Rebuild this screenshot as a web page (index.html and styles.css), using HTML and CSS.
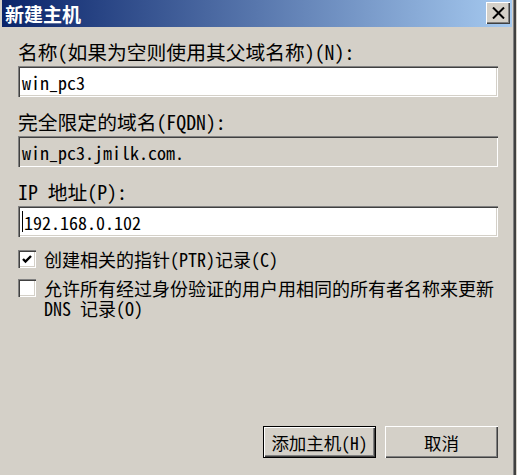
FILE: index.html
```html
<!DOCTYPE html>
<html lang="zh-CN">
<head>
    <meta charset="UTF-8">
    <title>新建主机</title>
    <link rel="stylesheet" href="styles.css">
</head>
<body>
    <div class="window">
        <div class="titlebar">
            <span class="title">新建主机</span>
            <button class="close" type="button">
                <svg width="13" height="12" viewBox="0 0 13 12">
                    <path d="M1 0.5 L12 11.5 M12 0.5 L1 11.5" stroke="#000" stroke-width="2"/>
                </svg>
            </button>
        </div>
        <div class="content">
            <label class="label">名称(如果为空则使用其父域名称)(N):</label>
            <div class="field">win_pc3</div>

            <label class="label">完全限定的域名(FQDN):</label>
            <div class="field readonly">win_pc3.jmilk.com.</div>

            <label class="label">IP 地址(P):</label>
            <div class="field"><span class="caret"></span>192.168.0.102</div>

            <div class="check-row first">
                <span class="checkbox checked">
                    <svg width="10" height="9" viewBox="0 0 10 9">
                        <path d="M1 4 L3.5 6.5 L9 1" fill="none" stroke="#000" stroke-width="2.4"/>
                    </svg>
                </span>
                <span class="check-text">创建相关的指针(PTR)记录(C)</span>
            </div>
            <div class="check-row">
                <span class="checkbox"></span>
                <span class="check-text">允许所有经过身份验证的用户用相同的所有者名称来更新<br>DNS 记录(O)</span>
            </div>

            <div class="actions">
                <button class="button default" type="button">添加主机(H)</button>
                <button class="button" type="button">取消</button>
            </div>
        </div>
    </div>
</body>
</html>
```

FILE: styles.css
```css
body {
    margin: 0;
    background-color: #d4d0c8;
    font-family: "Noto Sans Mono CJK SC", "Noto Sans CJK SC", sans-serif;
    font-size: 19.8px;
    color: #000;
}
.window {
    width: 517px;
    height: 475px;
    box-sizing: border-box;
    padding: 0 5px 0 2px;
    display: flex;
    flex-direction: column;
    background-color: #d4d0c8;
    box-shadow: inset -1px 0 #d4d0c8, inset -3px 0 #404040, inset -4px 0 #808080;
}
.titlebar {
    height: 27px;
    display: flex;
    align-items: center;
    justify-content: space-between;
    padding: 0 2px 0 3px;
    background: linear-gradient(to right, #0a246a, #a6caf0);
}
.title {
    color: #fff;
    font-weight: bold;
    font-size: 19px;
    line-height: 20px;
}
.close {
    width: 24px;
    height: 22px;
    padding: 0;
    margin-top: -1px;
    display: flex;
    align-items: center;
    justify-content: center;
    background-color: #d4d0c8;
    border: none;
    box-shadow: inset 1px 1px #fff, inset -1px -1px #404040, inset -2px -2px #808080;
}
.content {
    flex: 1;
    display: flex;
    flex-direction: column;
    padding: 15px 14px 17px 16px;
}
.label {
    display: block;
    line-height: 20px;
    margin-bottom: 4px;
}
.field {
    height: 31px;
    box-sizing: border-box;
    display: flex;
    align-items: center;
    padding: 0 4px;
    margin-bottom: 15px;
    font-size: 18px;
    background-color: #fff;
    box-shadow: inset 1px 1px #808080, inset 2px 2px #404040, inset -1px -1px #fff, inset -2px -2px #d4d0c8;
    white-space: pre;
}
.field.readonly {
    background-color: #d4d0c8;
}
.caret {
    width: 1px;
    height: 21px;
    margin-right: 1px;
    background-color: #000;
}
.check-row {
    display: flex;
    align-items: flex-start;
    gap: 8px;
    margin-bottom: 9px;
}
.check-row.first {
    margin-top: -3px;
}
.checkbox {
    width: 18px;
    height: 18px;
    flex-shrink: 0;
    box-sizing: border-box;
    margin-top: 1px;
    display: flex;
    align-items: center;
    justify-content: center;
    background-color: #fff;
    box-shadow: inset 1px 1px #808080, inset 2px 2px #404040, inset -1px -1px #fff, inset -2px -2px #d4d0c8;
}
.check-text {
    font-size: 18px;
    line-height: 20px;
    white-space: nowrap;
}
.actions {
    margin-top: auto;
    display: flex;
    justify-content: flex-end;
    gap: 9px;
}
.button {
    width: 113px;
    height: 32px;
    padding: 0;
    font-family: inherit;
    font-size: 17.5px;
    color: #000;
    background-color: #d4d0c8;
    border: none;
    box-shadow: inset 1px 1px #fff, inset -1px -1px #404040, inset -2px -2px #808080;
}
.button.default {
    border: 1px solid #000;
}
```
